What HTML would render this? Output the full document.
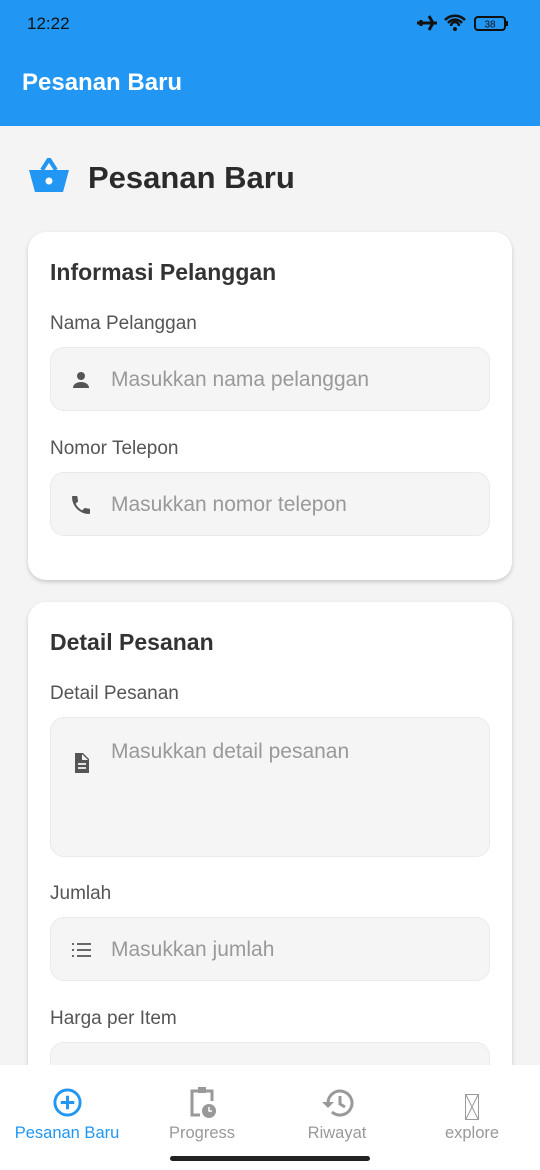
<!DOCTYPE html>
<html><head><meta charset="utf-8"><style>
*{box-sizing:border-box;margin:0;padding:0}
body{width:540px;height:1170px;overflow:hidden;background:#f4f4f4;font-family:"Liberation Sans",sans-serif;position:relative}
.top{position:absolute;left:0;top:0;width:540px;height:126px;background:#2196f3}
.time{position:absolute;left:27px;top:14px;font-size:17px;color:#111}
.apptitle{position:absolute;left:22px;top:69px;font-size:24px;font-weight:bold;color:#fff}
.h{position:absolute;left:88px;top:160px;font-size:31px;font-weight:bold;color:#2b2b2b}
.card{position:absolute;left:28px;width:484px;background:#fff;border-radius:18px;box-shadow:0 2px 4px rgba(0,0,0,.18)}
.ct{position:absolute;left:22px;font-size:23px;font-weight:bold;color:#333}
.lab{position:absolute;left:22px;font-size:19px;color:#555}
.inp{position:absolute;left:22px;width:440px;background:#f5f5f5;border:1px solid #eaeaea;border-radius:14px}
.ph{position:absolute;left:60px;font-size:21px;color:#999}
.ic{position:absolute;left:18px}
.nav{position:absolute;left:0;top:1065px;width:540px;height:105px;background:#fff}
.nl{position:absolute;top:59px;font-size:16.5px;color:#999;transform:translateX(-50%)}
</style></head><body>
<div class="top">
<div class="time">12:22</div>
<svg style="position:absolute;left:415px;top:12px" width="96" height="22" viewBox="0 0 96 22">
<path d="M2 11h20M14 4l4 7-4 7M6 8v6" stroke="#111" stroke-width="3" fill="none"/>
<path d="M30 8a14 14 0 0 1 20 0M33 11a9 9 0 0 1 14 0M36 14a4 4 0 0 1 8 0" stroke="#111" stroke-width="2.5" fill="none"/><circle cx="40" cy="17" r="2" fill="#111"/>
<rect x="60" y="5" width="30" height="13" rx="3" stroke="#111" stroke-width="2" fill="none"/><rect x="91" y="9" width="2" height="5" fill="#111"/>
<text x="75" y="15.5" font-size="10" text-anchor="middle" fill="#111" font-family="Liberation Sans">38</text></svg>
<div class="apptitle">Pesanan Baru</div>
</div>
<svg style="position:absolute;left:28px;top:158px" width="42" height="36" viewBox="0 0 42 36"><path d="M14 12 21 1 28 12" stroke="#2196f3" stroke-width="4" fill="none"/><path d="M1 12h40l-6 22H7z" fill="#2196f3"/><circle cx="21" cy="23" r="3.5" fill="#fff"/></svg>
<div class="h">Pesanan Baru</div>

<div class="card" style="top:232px;height:348px">
<div class="ct" style="top:27px">Informasi Pelanggan</div>
<div class="lab" style="top:81px">Nama Pelanggan</div>
<div class="inp" style="top:115px;height:64px">
<svg class="ic" style="top:20px" width="24" height="24" viewBox="0 0 24 24"><circle cx="12" cy="8" r="4" fill="#555"/><path d="M4 20c0-4 4-6 8-6s8 2 8 6z" fill="#555"/></svg>
<div class="ph" style="top:20px">Masukkan nama pelanggan</div></div>
<div class="lab" style="top:206px">Nomor Telepon</div>
<div class="inp" style="top:240px;height:64px">
<svg class="ic" style="top:20px" width="24" height="24" viewBox="0 0 24 24"><path d="M6.6 10.8a15 15 0 0 0 6.6 6.6l2.2-2.2c.3-.3.7-.4 1-.2 1.1.4 2.3.6 3.6.6.6 0 1 .4 1 1V20c0 .6-.4 1-1 1A17 17 0 0 1 3 4c0-.6.4-1 1-1h3.5c.6 0 1 .4 1 1 0 1.3.2 2.5.6 3.6.1.3 0 .7-.2 1z" fill="#555"/></svg>
<div class="ph" style="top:20px">Masukkan nomor telepon</div></div>
</div>

<div class="card" style="top:602px;height:520px">
<div class="ct" style="top:27px">Detail Pesanan</div>
<div class="lab" style="top:81px">Detail Pesanan</div>
<div class="inp" style="top:115px;height:140px">
<svg class="ic" style="top:33px" width="24" height="24" viewBox="0 0 24 24"><path d="M6 2h8l6 6v14H6zM13 3v6h6" fill="#555"/><path d="M9 13h8M9 17h8" stroke="#f5f5f5" stroke-width="1.8"/></svg>
<div class="ph" style="top:22px">Masukkan detail pesanan</div></div>
<div class="lab" style="top:281px">Jumlah</div>
<div class="inp" style="top:315px;height:64px">
<svg class="ic" style="top:20px" width="24" height="24" viewBox="0 0 24 24"><path d="M8 6h14M8 12h14M8 18h14M3 6h2M3 12h2M3 18h2" stroke="#555" stroke-width="1.8"/></svg>
<div class="ph" style="top:20px">Masukkan jumlah</div></div>
<div class="lab" style="top:406px">Harga per Item</div>
<div class="inp" style="top:440px;height:64px"></div>
</div>

<div class="nav">
<svg style="position:absolute;left:52px;top:22px" width="31" height="31" viewBox="0 0 32 32"><circle cx="16" cy="16" r="13" stroke="#2196f3" stroke-width="3" fill="none"/><path d="M16 9v14M9 16h14" stroke="#2196f3" stroke-width="3"/></svg>
<div class="nl" style="left:67px;color:#2196f3">Pesanan Baru</div>
<svg style="position:absolute;left:188px;top:20px" width="30" height="34" viewBox="0 0 30 34"><path d="M12 30H4V6h20v10" stroke="#999" stroke-width="3" fill="none"/><rect x="10" y="2" width="8" height="6" fill="#999"/><circle cx="21" cy="26" r="7" fill="#999"/><path d="M21 22v4h3" stroke="#fff" stroke-width="1.5" fill="none"/></svg>
<div class="nl" style="left:202px">Progress</div>
<svg style="position:absolute;left:320px;top:23px" width="34" height="30" viewBox="0 0 34 30"><path d="M8 15a12 12 0 1 1 4 9" stroke="#999" stroke-width="3" fill="none"/><path d="M2 14h12l-6 6z" fill="#999"/><path d="M20 8v8l5 3" stroke="#999" stroke-width="3" fill="none"/></svg>
<div class="nl" style="left:337px">Riwayat</div>
<svg style="position:absolute;left:465px;top:29px" width="14" height="26" viewBox="0 0 14 26"><rect x=".5" y=".5" width="13" height="25" stroke="#999" fill="none"/><path d="M1 1l12 24M13 1 1 25" stroke="#999"/></svg>
<div class="nl" style="left:472px">explore</div>
<div style="position:absolute;left:170px;top:91px;width:200px;height:5px;border-radius:3px;background:#222"></div>
</div>
</body></html>
